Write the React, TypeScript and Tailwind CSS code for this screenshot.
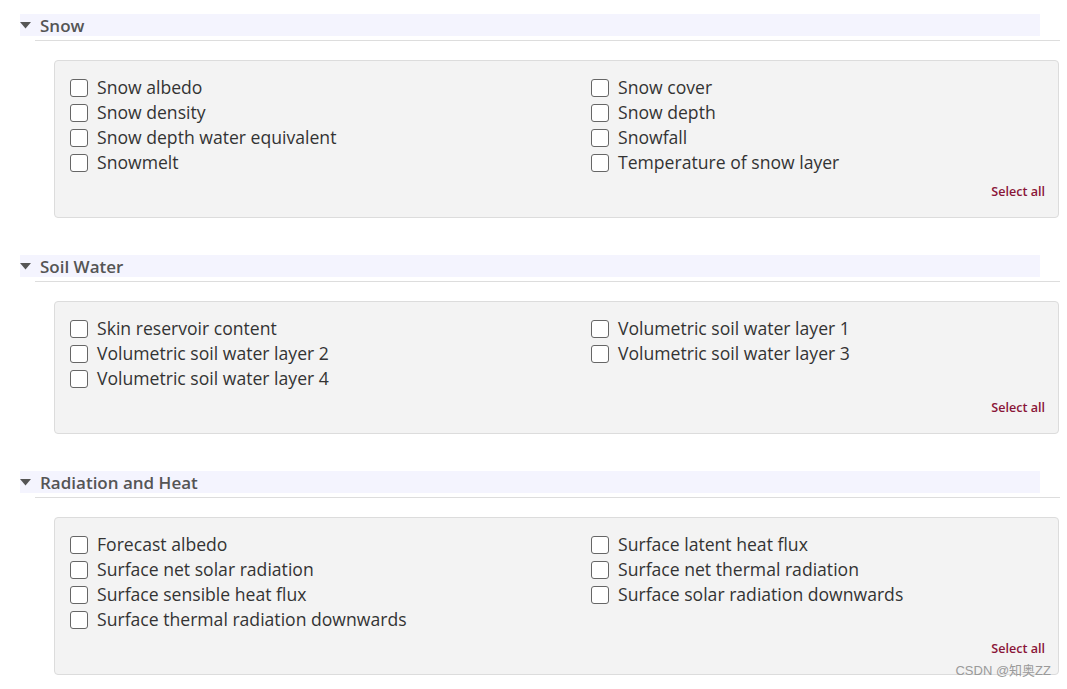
import React from "react";

const sections = [
  {
    title: "Snow",
    items: [
      "Snow albedo",
      "Snow cover",
      "Snow density",
      "Snow depth",
      "Snow depth water equivalent",
      "Snowfall",
      "Snowmelt",
      "Temperature of snow layer",
    ],
  },
  {
    title: "Soil Water",
    items: [
      "Skin reservoir content",
      "Volumetric soil water layer 1",
      "Volumetric soil water layer 2",
      "Volumetric soil water layer 3",
      "Volumetric soil water layer 4",
    ],
  },
  {
    title: "Radiation and Heat",
    items: [
      "Forecast albedo",
      "Surface latent heat flux",
      "Surface net solar radiation",
      "Surface net thermal radiation",
      "Surface sensible heat flux",
      "Surface solar radiation downwards",
      "Surface thermal radiation downwards",
    ],
  },
];

const Section = ({ title, items }: { title: string; items: string[] }) => (
  <section className="mb-[37px]">
    <div className="flex items-center h-[22px] w-[1020px] bg-[#f4f4fe]">
      <svg width="12" height="7" viewBox="0 0 12 7" className="mr-[8px]">
        <polygon points="0,0 11,0 5.5,6.5" fill="#555555" />
      </svg>
      <span className="text-[17px] font-semibold text-[#555555] leading-none">{title}</span>
    </div>
    <div className="ml-[15px] mt-[4px] h-px w-[1025px] bg-[#dddddd]" />
    <div className="ml-[34px] mt-[19px] w-[1005px] rounded-[4px] border border-[#dcdcdc] bg-[#f3f3f3] pl-[15px] pr-[13px] pt-[14px] pb-[16px]">
      <div className="grid grid-cols-[521px_1fr]">
        {items.map((it) => (
          <label key={it} className="flex items-center h-[25px] text-[17.6px] text-[#333333]">
            <span className="w-[18px] h-[18px] rounded-[3px] border-[1.5px] border-[#666666] bg-white mr-[9px] shrink-0" />
            {it}
          </label>
        ))}
      </div>
      <div className="flex justify-end mt-[8px]">
        <span className="text-[12.6px] font-semibold text-[#8a1538] leading-[18px]">Select all</span>
      </div>
    </div>
  </section>
);

export default function App() {
  return (
    <div
      className="relative w-[1067px] h-[689px] overflow-hidden bg-white pl-[20px] pt-[14px]"
      style={{ fontFamily: '"Open Sans", "Noto Sans", sans-serif' }}
    >
      {sections.map((s) => (
        <Section key={s.title} title={s.title} items={s.items} />
      ))}
      <div
        className="absolute right-[16px] bottom-[9px] text-[13px] text-[#9a9a9a]"
        style={{ fontFamily: '"Liberation Sans", "Noto Sans CJK SC", sans-serif' }}
      >
        CSDN @知奥ZZ
      </div>
    </div>
  );
}
